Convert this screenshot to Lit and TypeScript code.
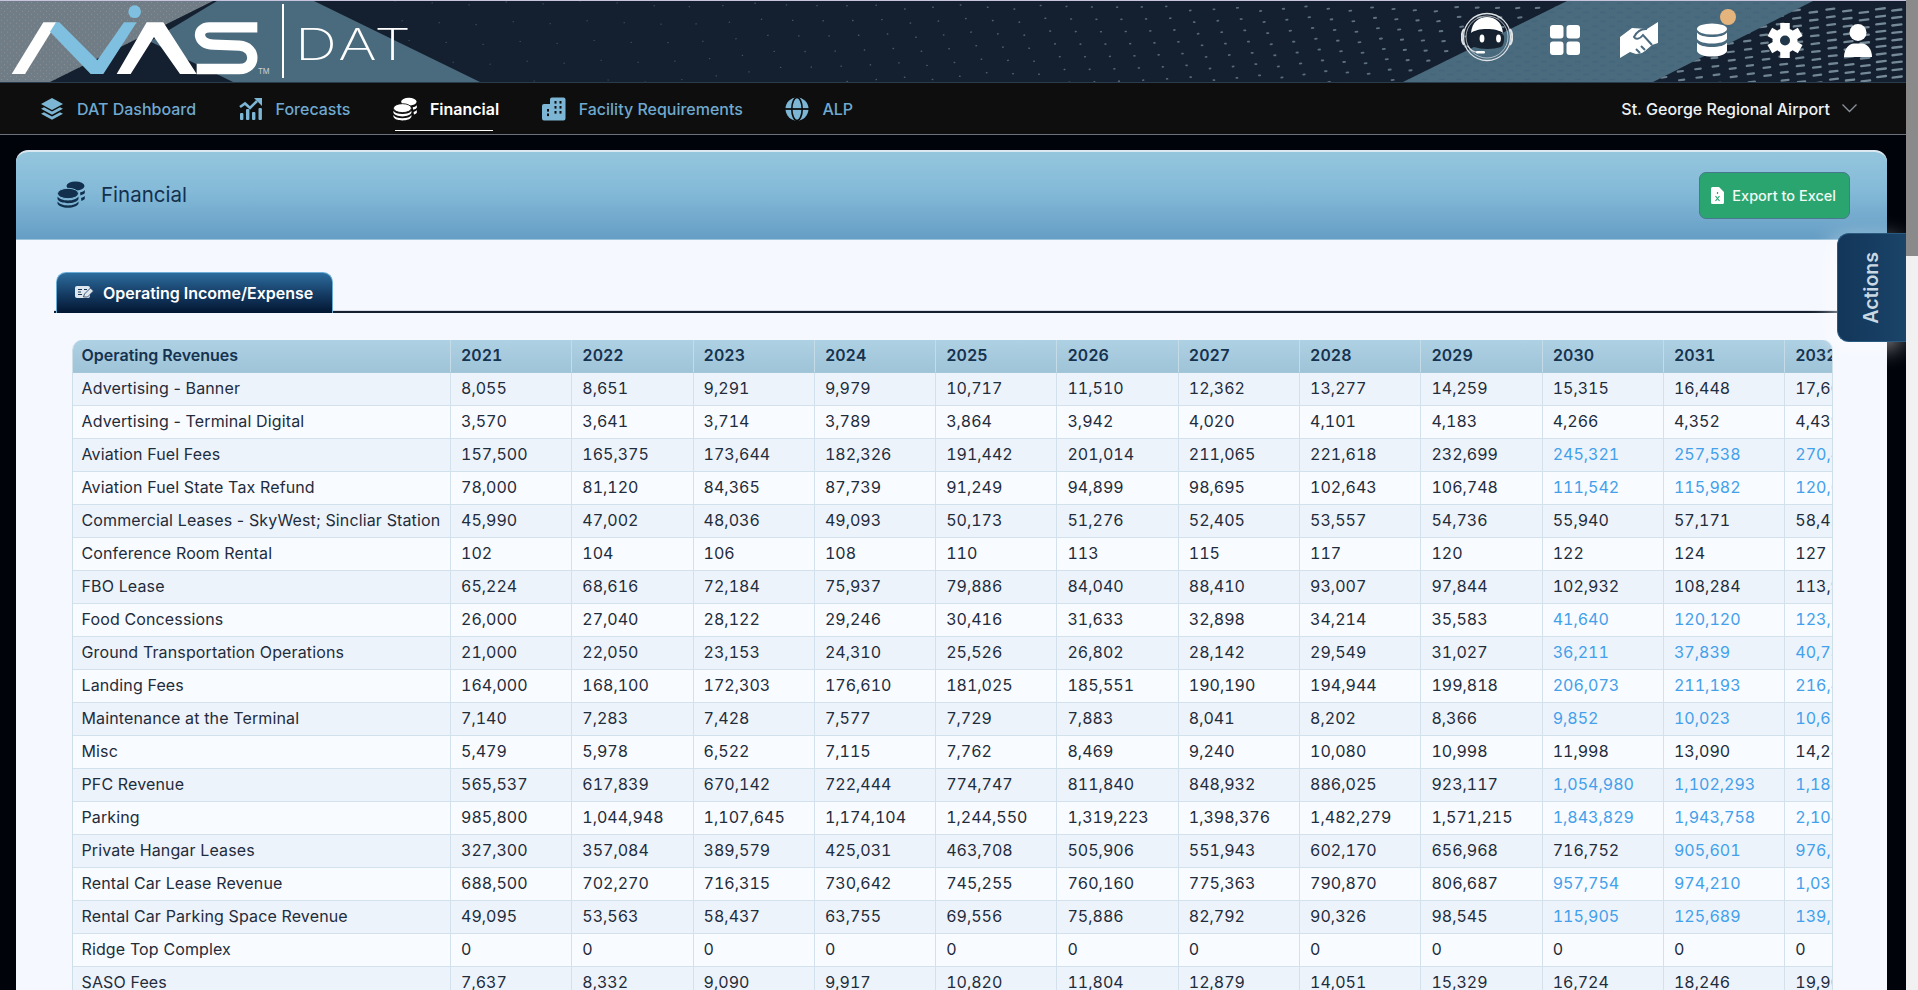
import { LitElement, css, html, svg } from "lit";
import { customElement } from "lit/decorators.js";

type Row = { name: string; values: string[]; blueFrom?: number };

const years = [2021, 2022, 2023, 2024, 2025, 2026, 2027, 2028, 2029, 2030, 2031, 2032];

const rows: Row[] = [
  { name: "Advertising - Banner", values: ["8,055", "8,651", "9,291", "9,979", "10,717", "11,510", "12,362", "13,277", "14,259", "15,315", "16,448", "17,665"] },
  { name: "Advertising - Terminal Digital", values: ["3,570", "3,641", "3,714", "3,789", "3,864", "3,942", "4,020", "4,101", "4,183", "4,266", "4,352", "4,439"] },
  { name: "Aviation Fuel Fees", values: ["157,500", "165,375", "173,644", "182,326", "191,442", "201,014", "211,065", "221,618", "232,699", "245,321", "257,538", "270,415"], blueFrom: 9 },
  { name: "Aviation Fuel State Tax Refund", values: ["78,000", "81,120", "84,365", "87,739", "91,249", "94,899", "98,695", "102,643", "106,748", "111,542", "115,982", "120,621"], blueFrom: 9 },
  { name: "Commercial Leases - SkyWest; Sincliar Station", values: ["45,990", "47,002", "48,036", "49,093", "50,173", "51,276", "52,405", "53,557", "54,736", "55,940", "57,171", "58,429"] },
  { name: "Conference Room Rental", values: ["102", "104", "106", "108", "110", "113", "115", "117", "120", "122", "124", "127"] },
  { name: "FBO Lease", values: ["65,224", "68,616", "72,184", "75,937", "79,886", "84,040", "88,410", "93,007", "97,844", "102,932", "108,284", "113,915"] },
  { name: "Food Concessions", values: ["26,000", "27,040", "28,122", "29,246", "30,416", "31,633", "32,898", "34,214", "35,583", "41,640", "120,120", "123,724"], blueFrom: 9 },
  { name: "Ground Transportation Operations", values: ["21,000", "22,050", "23,153", "24,310", "25,526", "26,802", "28,142", "29,549", "31,027", "36,211", "37,839", "40,731"], blueFrom: 9 },
  { name: "Landing Fees", values: ["164,000", "168,100", "172,303", "176,610", "181,025", "185,551", "190,190", "194,944", "199,818", "206,073", "211,193", "216,473"], blueFrom: 9 },
  { name: "Maintenance at the Terminal", values: ["7,140", "7,283", "7,428", "7,577", "7,729", "7,883", "8,041", "8,202", "8,366", "9,852", "10,023", "10,634"], blueFrom: 9 },
  { name: "Misc", values: ["5,479", "5,978", "6,522", "7,115", "7,762", "8,469", "9,240", "10,080", "10,998", "11,998", "13,090", "14,281"] },
  { name: "PFC Revenue", values: ["565,537", "617,839", "670,142", "722,444", "774,747", "811,840", "848,932", "886,025", "923,117", "1,054,980", "1,102,293", "1,188,607"], blueFrom: 9 },
  { name: "Parking", values: ["985,800", "1,044,948", "1,107,645", "1,174,104", "1,244,550", "1,319,223", "1,398,376", "1,482,279", "1,571,215", "1,843,829", "1,943,758", "2,104,384"], blueFrom: 9 },
  { name: "Private Hangar Leases", values: ["327,300", "357,084", "389,579", "425,031", "463,708", "505,906", "551,943", "602,170", "656,968", "716,752", "905,601", "976,212"], blueFrom: 10 },
  { name: "Rental Car Lease Revenue", values: ["688,500", "702,270", "716,315", "730,642", "745,255", "760,160", "775,363", "790,870", "806,687", "957,754", "974,210", "1,031,490"], blueFrom: 9 },
  { name: "Rental Car Parking Space Revenue", values: ["49,095", "53,563", "58,437", "63,755", "69,556", "75,886", "82,792", "90,326", "98,545", "115,905", "125,689", "139,240"], blueFrom: 9 },
  { name: "Ridge Top Complex", values: ["0", "0", "0", "0", "0", "0", "0", "0", "0", "0", "0", "0"] },
  { name: "SASO Fees", values: ["7,637", "8,332", "9,090", "9,917", "10,820", "11,804", "12,879", "14,051", "15,329", "16,724", "18,246", "19,906"] },
];

// dot field of the header, gets denser towards the right
function headerDots() {
  const out = [];
  let x = 395;
  while (x < 1930) {
    const t = Math.min(1, Math.max(0, (x - 640) / 1260));
    const dx = 37 - 21 * Math.pow(t, 0.55);
    const pitch = 20 - 12.5 * Math.pow(t, 0.5);
    const len = 0.3 + 9 * t * t * t;
    const w = 1.2 + 1.2 * t;
    const op = 0.35 + 0.45 * t;
    const shift = 7 * (1 - t);
    for (let j = 0; j * pitch < 84; j++) {
      const y = 12 - pitch * 0.6 + j * pitch + (x % 5);
      const px = x + j * shift;
      out.push(svg`<line x1=${px} y1=${y} x2=${px + len} y2=${y - len * 0.12} stroke-width=${w} stroke-opacity=${op}></line>`);
    }
    x += dx;
  }
  return out;
}

const dots = headerDots();

const coinsIcon = (c: string, gap: string) => html`
  <svg class="ic" viewBox="0 0 28 27" fill=${c}>
    <ellipse cx="18.5" cy="5" rx="9" ry="4.6"></ellipse>
    <path d="M23 11.5c2.5-.5 4-1.4 4.8-2.4v3c-.6 1-2 1.800-4.300 2.300zM24 17c2-.5 3.200-1.300 3.800-2.200v3c-.6.9-1.800 1.700-3.400 2.100z"></path>
    <ellipse cx="11" cy="12.500" rx="10.500" ry="5.200" stroke=${gap} stroke-width="1"></ellipse>
    <path d="M.5 15.500c1.500 2.400 5.500 3.900 10.500 3.900s9-1.500 10.500-3.900v2.500c-1 2.500-5 4.200-10.500 4.200S1.500 20.500.5 18z"></path>
    <path d="M.5 20.500c1.500 2.400 5.500 3.900 10.500 3.900s9-1.500 10.500-3.900v2c-1 2.600-5 4.300-10.500 4.300S1.500 25.100.5 22.500z"></path>
  </svg>
`;

const layersIcon = html`
  <svg class="ic" viewBox="0 0 24 22" fill="currentColor">
    <path d="M12 0l11 6-11 6L1 6z"></path>
    <path d="M1 10.800l3-1.600 8 4.300 8-4.300 3 1.600-11 6z"></path>
    <path d="M1 15.800l3-1.600 8 4.300 8-4.300 3 1.600-11 6z"></path>
  </svg>
`;

const chartIcon = html`
  <svg class="ic" viewBox="0 0 24 22" fill="currentColor">
    <path d="M1 9l5-3.500 5 4.500 7-7" fill="none" stroke="currentColor" stroke-width="2.600"></path>
    <path d="M15 0h8v8z"></path>
    <rect x="1" y="15" width="3.400" height="7" rx="1"></rect>
    <rect x="7" y="11" width="3.400" height="11" rx="1"></rect>
    <rect x="13" y="14" width="3.400" height="8" rx="1"></rect>
    <rect x="19.500" y="10" width="3.400" height="12" rx="1"></rect>
  </svg>
`;

const buildingIcon = html`
  <svg class="ic" viewBox="0 0 24 24" fill="currentColor">
    <path d="M2 7h6V2.500A2 2 0 0 1 10 .5h11.500a2 2 0 0 1 2 2V21.500a2 2 0 0 1-2 2H2a2 2 0 0 1-2-2V9a2 2 0 0 1 2-2z"></path>
    <g fill="#0e0e0e">
      <rect x="12.500" y="4" width="2" height="2.600"></rect><rect x="17.500" y="4" width="2" height="2.600"></rect>
      <rect x="12.500" y="9" width="2" height="2.600"></rect><rect x="17.500" y="9" width="2" height="2.600"></rect>
      <rect x="12.500" y="14" width="2" height="2.600"></rect><rect x="17.500" y="14" width="2" height="2.600"></rect>
      <rect x="5" y="12" width="2" height="2.600"></rect><rect x="5" y="16.500" width="2" height="2.600"></rect>
    </g>
  </svg>
`;

const globeIcon = html`
  <svg class="ic" viewBox="0 0 24 24">
    <circle cx="12" cy="12" r="11.500" fill="currentColor"></circle>
    <ellipse cx="12" cy="12" rx="5.200" ry="11.500" fill="none" stroke="#0e0e0e" stroke-width="1.600"></ellipse>
    <path d="M0 12h24" stroke="#0e0e0e" stroke-width="1.800"></path>
  </svg>
`;

const navItems = [
  { label: "DAT Dashboard", icon: layersIcon },
  { label: "Forecasts", icon: chartIcon },
  { label: "Financial", icon: coinsIcon("#fff", "#0e0e0e"), active: true },
  { label: "Facility Requirements", icon: buildingIcon },
  { label: "ALP", icon: globeIcon },
];

@customElement("app-root")
export class AppRoot extends LitElement {
  static styles = css`
    :host {
      display: block;
      height: 990px;
      overflow: hidden;
      font-family: Inter, "Noto Sans", sans-serif;
      background: #f1f1f1;
    }

    .shell {
      display: flex;
      height: 990px;
    }

    .page {
      position: relative;
      flex: 1;
      min-width: 0;
      overflow: hidden;
      background: #01030b;
    }

    .scrollbar {
      width: 12px;
      background: #f1f1f1;
    }

    .thumb {
      height: 256px;
      background: #8a8a8a;
    }

    /* header band */
    .top {
      position: relative;
      display: flex;
      align-items: center;
      height: 83px;
      border-top: 1px solid #c9c4de;
      border-bottom: 1px solid #2a3b4c;
      box-sizing: border-box;
      background: #14202f;
      overflow: hidden;
    }

    .art {
      position: absolute;
      inset: 0;
      width: 100%;
      height: 100%;
    }

    .logo {
      position: relative;
      display: block;
      width: 282px;
      height: 81px;
      flex: none;
    }

    .tm {
      position: absolute;
      left: 258px;
      top: 67px;
      font-size: 7.500px;
      line-height: 8px;
      color: #c9d2d8;
    }

    .divider {
      position: relative;
      width: 2px;
      height: 74px;
      margin-top: -2px;
      background: #fff;
    }

    .dat {
      position: relative;
      margin: 5px 0 0 11px;
      font-size: 43px;
      font-weight: 200;
      line-height: 44px;
      letter-spacing: 2px;
      color: #fff;
      transform: scaleX(1.36);
      transform-origin: left center;
    }

    .tools {
      position: relative;
      display: flex;
      align-items: center;
      margin: -3px 0 0 auto;
      padding-right: 11px;
    }

    .tool {
      position: relative;
      display: flex;
      align-items: center;
      justify-content: center;
      width: 73.250px;
      height: 60px;
    }

    .tool.bot {
      width: 84px;
      padding-bottom: 6px;
      box-sizing: border-box;
    }

    .badge {
      position: absolute;
      left: 45px;
      top: -1px;
      width: 16px;
      height: 16px;
      border-radius: 50%;
      background: #e4b47c;
    }

    /* nav */
    nav {
      display: flex;
      align-items: center;
      height: 51px;
      padding: 0 49px 0 40px;
      background: #0e0e0e;
      border-bottom: 1px solid #6c7279;
    }

    .item {
      position: relative;
      display: flex;
      align-items: center;
      gap: 13px;
      margin-right: 42.500px;
      font-size: 16px;
      font-weight: 500;
      color: #6fa9d0;
      white-space: nowrap;
    }

    .item .ic {
      width: 24px;
      height: 24px;
      color: #7db6d4;
    }

    .item.active {
      color: #fff;
      font-weight: 600;
    }

    .item.active::after {
      content: "";
      position: absolute;
      left: 2px;
      right: 6px;
      bottom: -10px;
      height: 1px;
      background: #fff;
    }

    .airport {
      display: flex;
      align-items: center;
      gap: 12px;
      margin-left: auto;
      font-size: 16px;
      font-weight: 500;
      color: #eef2f5;
      white-space: nowrap;
    }

    /* card */
    .card {
      margin: 15px 19px 0 16px;
      border-radius: 12px 12px 0 0;
      border-top: 2px solid #dbe8ef;
      overflow: hidden;
      background: #f5f8ff;
    }

    .card-head {
      display: flex;
      align-items: center;
      height: 87px;
      padding: 0 37px 0 41px;
      background: linear-gradient(#94c6dd, #84bad8 45%, #659dc4);
      border-bottom: 1px solid #9cc3dc;
    }

    .title {
      display: flex;
      align-items: center;
      gap: 16px;
      padding-bottom: 2px;
      font-size: 20.500px;
      font-weight: 400;
      color: #12304e;
    }

    .title .ic {
      width: 28px;
      height: 27px;
    }

    .export {
      display: flex;
      align-items: center;
      gap: 8px;
      height: 47px;
      margin-left: auto;
      padding: 0 13px 0 11px;
      box-sizing: border-box;
      border: 1px solid #47788e;
      border-radius: 7px;
      background: #2aa570;
      color: #f1faf5;
      font: 500 14.500px Inter, sans-serif;
    }

    .card-body {
      padding: 32px 0 0 38px;
    }

    .tabs {
      display: flex;
      padding-left: 2px;
      border-bottom: 2px solid #14202f;
      box-shadow: 0 -1px 0 #d9dbe4 inset;
    }

    .tab {
      display: flex;
      align-items: center;
      gap: 9px;
      height: 41px;
      margin-bottom: -2px;
      padding: 0 19px 0 18px;
      box-sizing: border-box;
      border: 1px solid #69add6;
      border-bottom: 0;
      border-radius: 10px 10px 0 0;
      background: linear-gradient(#2c6c9c, #143a62 55%, #021631);
      color: #fff;
      font-size: 16px;
      font-weight: 600;
      white-space: nowrap;
    }

    .table-wrap {
      margin: 27px 54px 0 17.500px;
      overflow: hidden;
      border-radius: 10px 10px 0 0;
      border-left: 1px solid #cfdfea;
      border-right: 1px solid #cfdfea;
    }

    table {
      width: 1834px;
      table-layout: fixed;
      border-collapse: separate;
      border-spacing: 0;
      font-size: 16px;
      color: #1f2c3b;
    }

    th,
    td {
      height: 33px;
      box-sizing: border-box;
      padding: 0 10px 2px 10px;
      text-align: left;
      white-space: nowrap;
      overflow: hidden;
      border-right: 1px solid #d3e1ed;
      border-bottom: 1px solid #d3e1ed;
      font-variant-numeric: tabular-nums;
    }

    th.name,
    td.name {
      padding-left: 9px;
      font-variant-numeric: normal;
    }

    td.name {
      letter-spacing: 0.130px;
    }

    th {
      background: linear-gradient(#aed1e4, #9fc3d7);
      color: #15324f;
      font-weight: 600;
      border-right-color: #c4dbe8;
      border-bottom-color: #a3c6d9;
    }

    tbody tr:nth-child(odd) td {
      background: #edf3fb;
    }

    tbody tr:nth-child(even) td {
      background: #f8fbff;
    }

    td.blue {
      color: #43a0ea;
    }

    .actions {
      position: absolute;
      top: 233px;
      right: 0;
      display: flex;
      align-items: center;
      justify-content: center;
      width: 69px;
      height: 109px;
      padding-right: 3px;
      box-sizing: border-box;
      border: 1px solid #2a5a80;
      border-right: 0;
      border-radius: 12px 0 0 12px;
      background: linear-gradient(90deg, #12365a, #1a4468);
      box-shadow: -6px 6px 22px rgba(255, 255, 255, 0.55);
      color: #c9d8e3;
      font-size: 19.500px;
      font-weight: 600;
    }

    .actions span {
      writing-mode: vertical-rl;
      transform: rotate(180deg);
    }
  `;

  private renderArt() {
    return html`
      <svg class="art" viewBox="0 0 1906 82" preserveAspectRatio="none">
        <defs>
          <pattern id="speck" width="6" height="6" patternUnits="userSpaceOnUse">
            <rect x="1" y="1" width="1" height="1" fill="#9a8a78"></rect>
            <rect x="4" y="4" width="1" height="1" fill="#8b8f92"></rect>
          </pattern>
          <pattern id="wave" width="17" height="9" patternUnits="userSpaceOnUse">
            <path d="M2 3l1.500-1 1.500 1 1.500-1 1.500 1M11 8l1.500-1 1.500 1 1.500-1 1.500 1" fill="none" stroke="#3c6179" stroke-width="0.800"></path>
          </pattern>
        </defs>
        <g stroke="#8fa5b4" stroke-linecap="round">${dots}</g>
        <polygon points="0,0 213,0 50,82 0,82" fill="#717d86"></polygon>
        <polygon points="0,0 213,0 50,82 0,82" fill="url(#speck)"></polygon>
        <polygon points="217,0 314,0 480,82 233,82 150,41" fill="#4a6a7e"></polygon>
        <polygon points="1567,0 1813,0 1653,82 1403,82" fill="#4a6a7e"></polygon>
        <polygon points="1567,0 1813,0 1653,82 1403,82" fill="url(#wave)"></polygon>
      </svg>
    `;
  }

  private renderLogo() {
    return html`
      <svg class="logo" viewBox="0 0 846 243">
        <polygon points="35,219 75,219 155,90 170,64 130,64" fill="#fff"></polygon>
        <polygon points="150,92 168,64 178,64 292,178 372,64 410,64 310,219 272,219" fill="#7fc0e0"></polygon>
        <circle cx="404" cy="32" r="19" fill="#7fc0e0"></circle>
        <polygon points="350,219 392,219 462,108 540,219 590,219 490,64 440,64" fill="#fff"></polygon>
        <path d="M772 79H628C588 79 590 130 640 131L718 134C770 137 770 204 718 204H590" fill="none" stroke="#fff" stroke-width="31"></path>
      </svg>
      <span class="tm">TM</span>
    `;
  }

  private renderTools() {
    return html`
      <div class="tools">
        <div class="tool bot">
          <svg width="52" height="50" viewBox="0 0 52 50">
            <circle cx="26" cy="25" r="23.500" fill="none" stroke="#dfe3e6" stroke-width="1.300"></circle>
            <circle cx="26" cy="25" r="21" fill="none" stroke="#dfe3e6" stroke-width="0.700"></circle>
            <path d="M10 21C11 10 18 5 26 5s15 5 16 16c-3-2.500-9-4-16-4s-13 1.500-16 4z" fill="#fff"></path>
            <path d="M10 24c2-4 9-6 16-6s14 2 17 6c.5 5-.5 9-3 11-8 2.500-19 2.500-27 0-3-2-3.500-6-3-11z" fill="#16222f"></path>
            <ellipse cx="21" cy="26.500" rx="2.400" ry="4" fill="#fff"></ellipse>
            <ellipse cx="37.500" cy="26.500" rx="2.400" ry="4" fill="#fff"></ellipse>
            <path d="M3 17c-3 4-3 12 0 16M49 17c3 4 3 12 0 16" fill="none" stroke="#dfe3e6" stroke-width="2"></path>
            <path d="M7 34c2 4 6 6 10 6.500" fill="none" stroke="#dfe3e6" stroke-width="1.300"></path>
            <rect x="15" y="39" width="9" height="2.600" rx="1.300" fill="#fff"></rect>
          </svg>
        </div>
        <div class="tool">
          <svg width="30" height="30" viewBox="0 0 30 30" fill="#fff">
            <rect width="13.500" height="13.500" rx="3"></rect>
            <rect x="16.500" width="13.500" height="13.500" rx="3"></rect>
            <rect y="16.500" width="13.500" height="13.500" rx="3"></rect>
            <rect x="16.500" y="16.500" width="13.500" height="13.500" rx="3"></rect>
          </svg>
        </div>
        <div class="tool">
          <svg width="38" height="36" viewBox="0 0 38 36">
            <path d="M0 36V15L12 6l15 1L38 0v21l-6 2-7 6-3 2-6 1-6-2z" fill="#fff"></path>
            <path d="M27 7c-6-.5-10 2-13 8 2 3 6 2 9-2l9 10M20 31l-4-4M25 28l-4-4" fill="none" stroke="#4a6a7e" stroke-width="2"></path>
          </svg>
        </div>
        <div class="tool">
          <svg width="30" height="34" viewBox="0 0 30 34" fill="#fff">
            <ellipse cx="15" cy="6" rx="15" ry="5.500"></ellipse>
            <path d="M0 9.500C2 12.500 8 14 15 14s13-1.500 15-4.500v6.500c-2 3-8 4.500-15 4.500S2 19 0 16z"></path>
            <path d="M0 19.500C2 22.500 8 24 15 24s13-1.500 15-4.500V28c-1 3.500-7 5.500-15 5.500S1 31.500 0 28z"></path>
          </svg>
          <span class="badge"></span>
        </div>
        <div class="tool">
          <svg width="36" height="37" viewBox="-18 -18.500 36 37">
            <g stroke="#fff" stroke-width="9.500">
              <path d="M0-17.500V17.500M-15.200-8.700L15.200 8.700M-15.200 8.700L15.200-8.700"></path>
            </g>
            <circle r="12.500" fill="#fff"></circle>
            <circle r="5" fill="#22364a"></circle>
          </svg>
        </div>
        <div class="tool">
          <svg width="28" height="33" viewBox="0 0 28 33" fill="#fff">
            <circle cx="14" cy="8.500" r="8.500"></circle>
            <path d="M0 33c0-8 5-13.500 10-13.500h8c5 0 10 5.500 10 13.500z"></path>
          </svg>
        </div>
      </div>
    `;
  }

  private renderTable() {
    return html`
      <div class="table-wrap">
        <table>
          <colgroup>
            <col style="width:378.500px" />
            ${years.map(() => html`<col style="width:121.300px" />`)}
          </colgroup>
          <thead>
            <tr>
              <th class="name">Operating Revenues</th>
              ${years.map((y) => html`<th>${y}</th>`)}
            </tr>
          </thead>
          <tbody>
            ${rows.map(
              (r) => html`
                <tr>
                  <td class="name">${r.name}</td>
                  ${r.values.map(
                    (v, i) => html`<td class=${r.blueFrom !== undefined && i >= r.blueFrom ? "blue" : ""}>${v}</td>`
                  )}
                </tr>
              `
            )}
          </tbody>
        </table>
      </div>
    `;
  }

  render() {
    return html`
      <div class="shell">
        <div class="page">
          <div class="top">
            ${this.renderArt()} ${this.renderLogo()}
            <span class="divider"></span>
            <span class="dat">DAT</span>
            ${this.renderTools()}
          </div>
          <nav>
            ${navItems.map(
              (n) => html`<div class="item ${n.active ? "active" : ""}">${n.icon}<span>${n.label}</span></div>`
            )}
            <div class="airport">
              St. George Regional Airport
              <svg width="15" height="9" viewBox="0 0 15 9"><path d="M.5.5l7 7 7-7" fill="none" stroke="#8b9299" stroke-width="1.300"></path></svg>
            </div>
          </nav>
          <section class="card">
            <div class="card-head">
              <div class="title">${coinsIcon("#12304e", "#7fb5d4")}Financial</div>
              <button class="export">
                <svg width="13" height="17" viewBox="0 0 13 17">
                  <path d="M1.500 0H8l5 5v10.500a1.500 1.500 0 0 1-1.500 1.500h-10A1.500 1.500 0 0 1 0 15.500v-14A1.500 1.500 0 0 1 1.500 0z" fill="#fff"></path>
                  <path d="M4.500 9l4 5m0-5l-4 5" stroke="#2aa570" stroke-width="1.200"></path>
                  <path d="M6.500 5v2" stroke="#2aa570" stroke-width="1.200"></path>
                </svg>
                Export to Excel
              </button>
            </div>
            <div class="card-body">
              <div class="tabs">
                <div class="tab">
                  <svg width="19" height="16" viewBox="0 0 19 16">
                    <rect y="1" width="15" height="12" rx="2" fill="#dfe7ee"></rect>
                    <path d="M3 4.500h4M3 7h3M3 9.500h4M9 4.500h3" stroke="#16365a" stroke-width="1.100"></path>
                    <path d="M8.500 12l1-3 6-6 3 3-6 6z" fill="#dfe7ee" stroke="#16365a" stroke-width="0.800"></path>
                  </svg>
                  Operating Income/Expense
                </div>
              </div>
              ${this.renderTable()}
            </div>
          </section>
          <div class="actions"><span>Actions</span></div>
        </div>
        <div class="scrollbar"><div class="thumb"></div></div>
      </div>
    `;
  }
}
